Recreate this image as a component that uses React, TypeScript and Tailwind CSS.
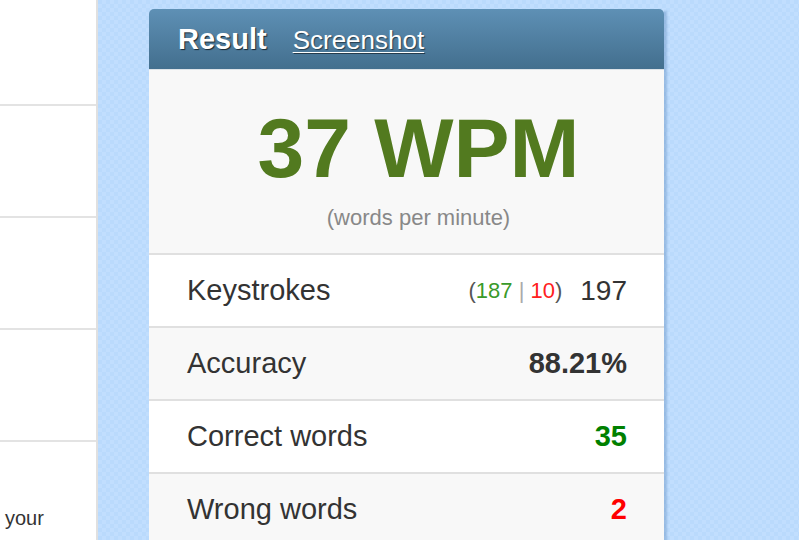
import React from 'react';

const rows = [
  { label: 'Keystrokes', bg: 'bg-white', value: 'keys' },
  { label: 'Accuracy', bg: 'bg-[#f8f8f8]', value: 'acc' },
  { label: 'Correct words', bg: 'bg-white', value: 'ok' },
  { label: 'Wrong words', bg: 'bg-[#f8f8f8]', value: 'bad' },
];

function RowValue({ kind }: { kind: string }) {
  if (kind === 'keys') {
    return (
      <div className="flex items-center gap-[18px]">
        <span className="text-[22px] text-[#555]">
          (<span className="text-[#3a9a2a]">187</span>{' '}
          <span className="text-[#aaa]">|</span>{' '}
          <span className="text-[#ff2020]">10</span>)
        </span>
        <span className="text-[28px] text-[#333]">197</span>
      </div>
    );
  }
  if (kind === 'acc') return <span className="text-[29px] font-bold text-[#333]">88.21%</span>;
  if (kind === 'ok') return <span className="text-[29px] font-bold text-[#008000]">35</span>;
  return <span className="text-[29px] font-bold text-[#ff0000]">2</span>;
}

export default function App() {
  return (
    <div className="flex h-[540px] w-[799px] overflow-hidden font-['Liberation_Sans',Arial,sans-serif]">
      <div className="flex w-[98px] shrink-0 flex-col border-r-2 border-[#e0e0e0] bg-white">
        <div className="h-[106px] shrink-0 border-b-2 border-[#e3e3e3]" />
        <div className="h-[112px] shrink-0 border-b-2 border-[#e3e3e3]" />
        <div className="h-[112px] shrink-0 border-b-2 border-[#e3e3e3]" />
        <div className="h-[112px] shrink-0 border-b-2 border-[#e3e3e3]" />
        <div className="flex-1 pl-[5px] pt-[66px] text-[20px] leading-none text-[#333]">your</div>
      </div>
      <div className="flex-1 bg-[#bddcfd] bg-[conic-gradient(#c1defe_25%,#badafc_0_50%,#c1defe_0_75%,#badafc_0)] bg-[length:8px_8px] pl-[51px] pt-[9px]">
        <div className="w-[515px] shadow-[3px_2px_2px_rgba(40,90,150,0.25)]">
          <div className="flex h-[60px] items-center gap-[26px] rounded-t-[5px] bg-gradient-to-b from-[#5e90b5] to-[#436f8e] pl-[29px] pt-[2px] text-white">
            <span className="text-[29px] font-bold [text-shadow:1px_1px_1px_rgba(0,0,0,0.7)]">Result</span>
            <span className="text-[26px] underline decoration-1 underline-offset-[3px] [text-shadow:1px_1px_1px_rgba(0,0,0,0.5)]">Screenshot</span>
          </div>
          <div className="flex h-[186px] flex-col items-center border-t border-[#dde3e8] border-b-2 border-b-[#e0e0e0] bg-[#f8f8f8] pl-[24px] pt-[36px]">
            <div className="text-[84px] font-bold leading-none text-[#527a1f]">37 WPM</div>
            <div className="mt-[17px] text-[22px] leading-none text-[#888]">(words per minute)</div>
          </div>
          {rows.map((r) => (
            <div
              key={r.label}
              className={`flex h-[73px] items-center justify-between border-b-2 border-[#e0e0e0] pl-[38px] pr-[37px] ${r.bg}`}
            >
              <span className="text-[29px] text-[#333]">{r.label}</span>
              <RowValue kind={r.value} />
            </div>
          ))}
        </div>
      </div>
    </div>
  );
}
